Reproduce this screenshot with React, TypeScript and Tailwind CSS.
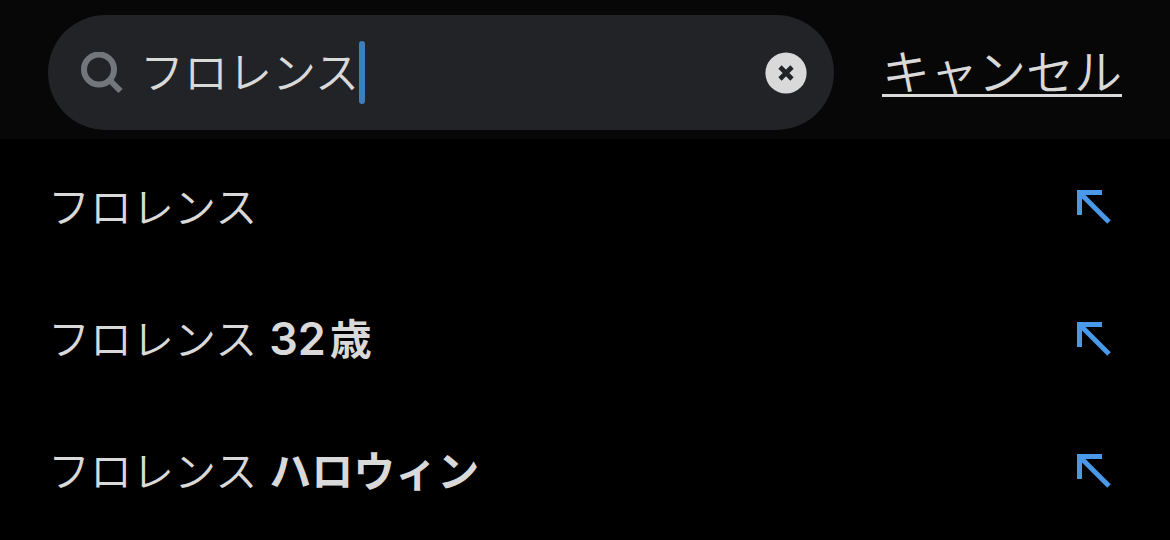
import { useRef, useState } from "react";

const suggestions = [
  { typed: "フロレンス", number: "", word: "" },
  { typed: "フロレンス", number: "32", word: "歳" },
  { typed: "フロレンス", number: "", word: "ハロウィン" },
];

function SearchIcon() {
  return (
    <svg viewBox="0 0 42 42" className="size-[42px] shrink-0" fill="none" stroke="#73777c" strokeWidth="6" aria-hidden="true">
      <circle cx="18" cy="17.5" r="15" />
      <path d="M28 27.5 39.5 39" />
    </svg>
  );
}

function ClearIcon() {
  return (
    <svg viewBox="0 0 42 42" className="size-[42px]" aria-hidden="true">
      <circle cx="21" cy="21" r="20.6" fill="#d9d9d9" />
      <path d="M15 15 27 27M27 15 15 27" stroke="#222327" strokeWidth="4.6" />
    </svg>
  );
}

function FillArrowIcon() {
  return (
    <svg viewBox="0 0 34 34" className="size-[34px]" fill="none" stroke="#4a99e9" strokeWidth="5" aria-hidden="true">
      <path d="M25 2.5H2.5V25" />
      <path d="M3 3 32 32" />
    </svg>
  );
}

export default function App() {
  const [query, setQuery] = useState("フロレンス");
  const inputRef = useRef<HTMLInputElement>(null);

  return (
    <main className="min-h-screen bg-black font-['Inter','Noto_Sans_CJK_JP',sans-serif] text-[#d9d9d9]">
      {/* Search bar */}
      <header className="flex items-center gap-12 bg-[#070707] px-12 pt-[15px] pb-[9px]">
        <div
          className="flex h-[115px] min-w-0 flex-1 items-center rounded-full bg-[#222327] pr-[27px] pl-[33px]"
          onClick={() => inputRef.current?.focus()}
        >
          <SearchIcon />
          <input
            ref={inputRef}
            type="text"
            aria-label="検索"
            value={query}
            onChange={(e) => setQuery(e.target.value)}
            className="ml-[17px] h-16 min-w-0 field-sizing-content text-[44px] font-[350] caret-transparent outline-none"
          />
          <span className="h-[63px] w-1.5 shrink-0 rounded-full bg-[#3d7ebf]" />
          <button type="button" aria-label="クリア" className="ml-auto shrink-0" onClick={() => setQuery("")}>
            <ClearIcon />
          </button>
        </div>
        <button
          type="button"
          className="shrink-0 text-5xl font-[350] underline decoration-3 underline-offset-4 [text-decoration-skip-ink:none]"
        >
          キャンセル
        </button>
      </header>

      {/* Suggestions */}
      <ul className="pt-0.5">
        {suggestions.map(({ typed, number, word }) => (
          <li key={typed + number + word} className="flex h-33 items-center justify-between pr-[59px] pl-12">
            <a href="#" className="text-[42px] font-[350]">
              {typed}
              {word && (
                <b className="ml-0.5 font-bold">
                  {" "}
                  {number && <span className="mr-1 text-[45px] font-semibold">{number}</span>}
                  {word}
                </b>
              )}
            </a>
            <button type="button" aria-label="検索欄に入力" onClick={() => setQuery(`${typed} ${number}${word}`.trim())}>
              <FillArrowIcon />
            </button>
          </li>
        ))}
      </ul>
    </main>
  );
}
